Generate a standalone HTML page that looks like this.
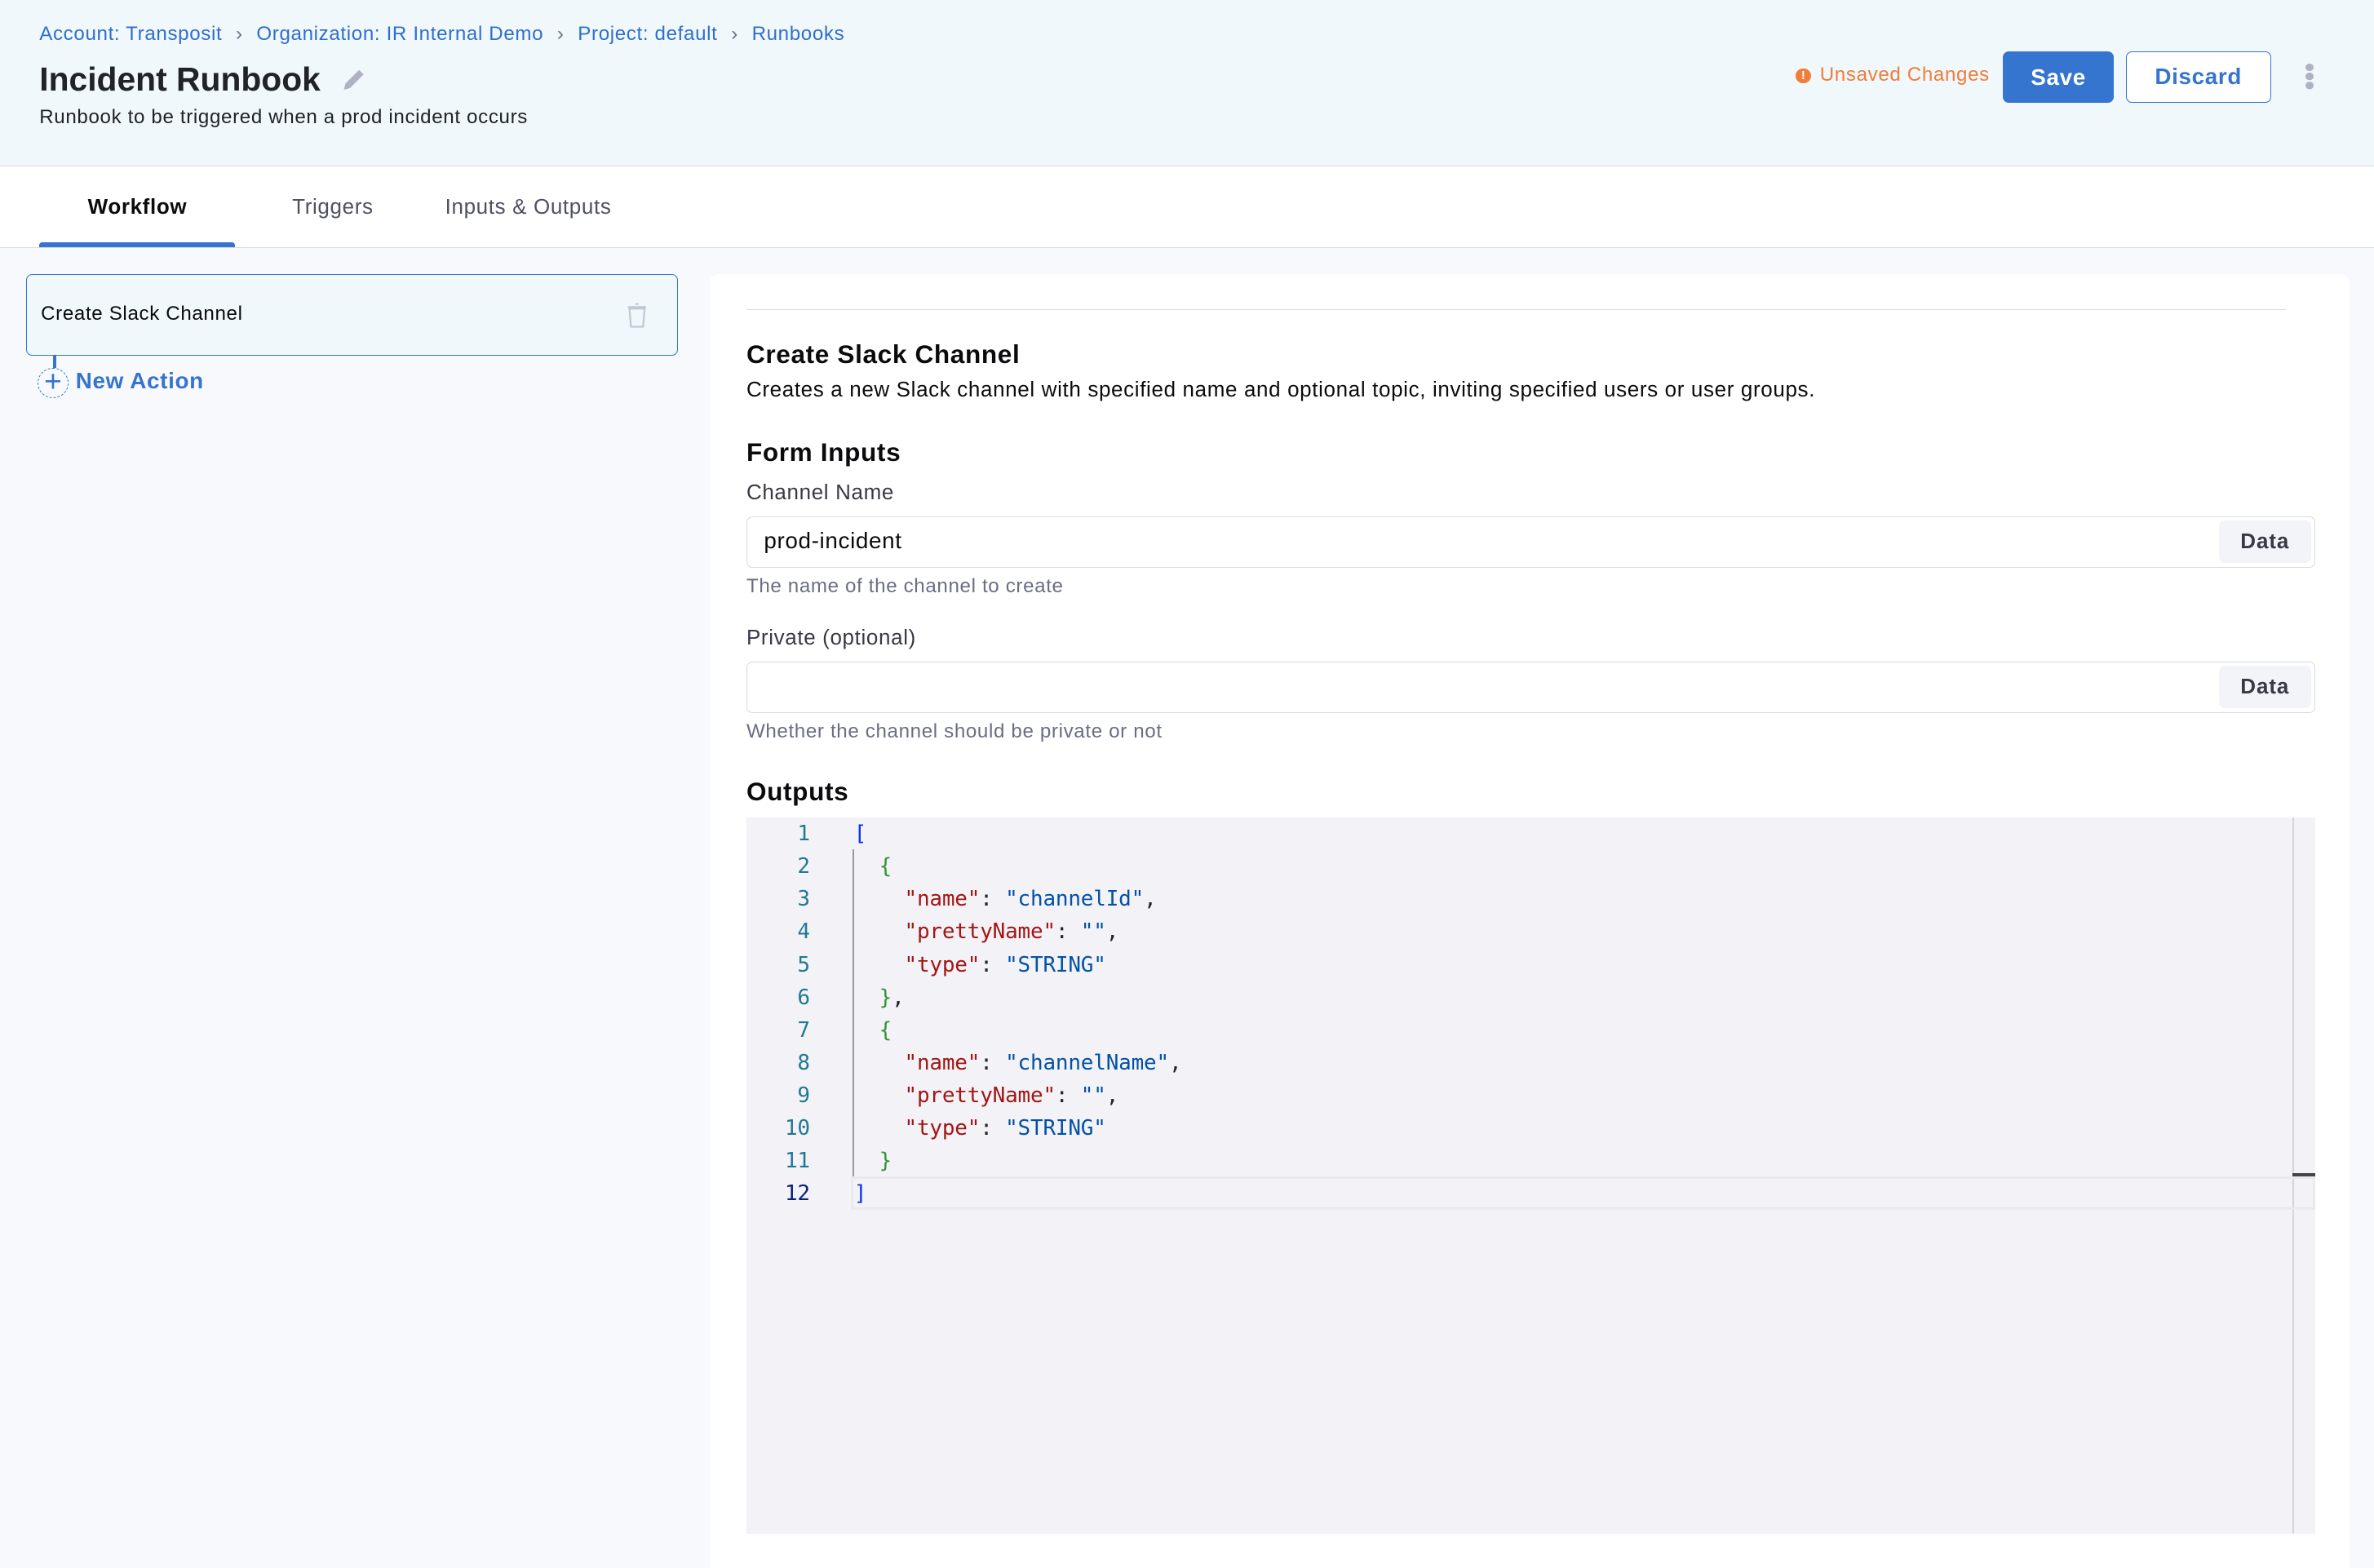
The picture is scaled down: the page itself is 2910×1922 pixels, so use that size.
<!DOCTYPE html>
<html><head><meta charset="utf-8"><style>
*{box-sizing:border-box;margin:0;padding:0}
html,body{width:2910px;height:1922px;overflow:hidden;background:#f8f9fc}
#w{zoom:1.85587;width:1568px;height:1036px;position:relative;font-family:"Liberation Sans",sans-serif;color:#22222a;overflow:hidden;letter-spacing:.35px}
.a{position:absolute;white-space:nowrap}
.hdr{left:0;top:0;width:1568px;height:110px;background:#f0f8fb;border-bottom:1px solid #d9dae5}
.bc{top:15px;left:26px;font-size:13px;color:#2f6fce}
.bc span{color:#6b6d85;margin:0 9px}
.tabs{left:0;top:110px;width:1568px;height:54px;background:#fff;border-bottom:1px solid #d9dae5}
.panel{left:469px;top:181px;width:1083px;height:870px;background:#fff;border-radius:6px}
.lbl{font-size:14px;color:#383946}
.help{font-size:13px;color:#6b6d85}
.inp{left:493px;width:1036px;height:34px;border:1px solid #d9dae5;border-radius:4px;background:#fff}
.data{position:absolute;right:2px;top:2px;width:61px;height:28px;background:#f3f3fa;border-radius:4px;font-size:14px;font-weight:bold;color:#383946;text-align:center;line-height:28px;letter-spacing:.5px}
.ed{left:493px;top:540px;width:1036px;height:473px;background:#f2f2f7}
.ln{font-family:"DejaVu Sans Mono",monospace;font-size:14px;line-height:21.6px;letter-spacing:-.1px}
.k{color:#a31515}.s{color:#0451a5}.g{color:#319331}.b{color:#0431fa}
</style></head><body><div id="w">
<div class="a hdr"></div>
<div class="a bc">Account: Transposit<span>›</span>Organization: IR Internal Demo<span>›</span>Project: default<span>›</span>Runbooks</div>
<div class="a" style="left:26px;top:40px;font-size:22px;font-weight:bold;color:#22222a;letter-spacing:0">Incident Runbook</div>
<svg class="a" style="left:224px;top:44px" width="18" height="18" viewBox="0 0 18 18"><path d="M3 15 L4 11 L13 2 L16 5 L7 14 Z" fill="#b0b1c4"/></svg>
<div class="a" style="left:26px;top:70px;font-size:13px">Runbook to be triggered when a prod incident occurs</div>
<div class="a" style="left:1186px;top:45px;width:10px;height:10px;border-radius:50%;background:#f07d3a;color:#fff;font-size:8px;font-weight:bold;text-align:center;line-height:10px;letter-spacing:0">!</div>
<div class="a" style="left:1202px;top:42px;font-size:13px;color:#f07d3a">Unsaved Changes</div>
<div class="a" style="left:1323px;top:34px;width:73px;height:34px;background:#3574cf;border-radius:4px;color:#fff;font-weight:bold;font-size:15px;text-align:center;line-height:34px">Save</div>
<div class="a" style="left:1404px;top:34px;width:96px;height:34px;background:#fff;border:1px solid #3574cf;border-radius:4px;color:#3574cf;font-weight:bold;font-size:15px;text-align:center;line-height:32px">Discard</div>
<div class="a" style="left:1523px;top:42px;width:5px;height:5px;border-radius:50%;background:#b0b1c4;box-shadow:0 6px 0 #b0b1c4,0 12px 0 #b0b1c4"></div>
<div class="a tabs"></div>
<div class="a" style="left:58px;top:128px;font-size:14px;font-weight:bold;color:#0b0b0d">Workflow</div>
<div class="a" style="left:193px;top:128px;font-size:14px;color:#4f5162">Triggers</div>
<div class="a" style="left:294px;top:128px;font-size:14px;color:#4f5162">Inputs &amp; Outputs</div>
<div class="a" style="left:26px;top:160px;width:129px;height:3px;background:#3574cf;border-radius:2px 2px 0 0"></div>
<div class="a" style="left:17px;top:181px;width:431px;height:54px;border:1px solid #3574cf;border-radius:4px;background:#f0f8fb"></div>
<div class="a" style="left:27px;top:200px;font-size:13px;color:#0b0b0d">Create Slack Channel</div>
<svg class="a" style="left:413px;top:199px" width="16" height="18" viewBox="0 0 16 18"><path d="M3 5 H13 L12 17 H4 Z M2 4 H14 M7 2 H9" fill="none" stroke="#c5c6d4" stroke-width="1.2"/></svg>
<div class="a" style="left:35px;top:235px;width:2px;height:8px;background:#3574cf"></div>
<div class="a" style="left:25px;top:243px;width:20px;height:20px;border:1px dashed #3574cf;border-radius:50%;color:#3574cf;font-size:20px;line-height:17px;text-align:center;letter-spacing:0">+</div>
<div class="a" style="left:50px;top:243px;font-size:15px;font-weight:bold;color:#3574cf">New Action</div>
<div class="a panel"></div>
<div class="a" style="left:493px;top:204px;width:1017px;height:1px;background:#d9dae5"></div>
<div class="a" style="left:493px;top:224px;font-size:17px;font-weight:bold;color:#0b0b0d">Create Slack Channel</div>
<div class="a" style="left:493px;top:249px;font-size:14px;color:#0b0b0d">Creates a new Slack channel with specified name and optional topic, inviting specified users or user groups.</div>
<div class="a" style="left:493px;top:289px;font-size:17px;font-weight:bold;color:#0b0b0d">Form Inputs</div>
<div class="a lbl" style="left:493px;top:317px">Channel Name</div>
<div class="a inp" style="top:341px"><div style="position:absolute;left:11px;top:7px;font-size:15px;color:#0b0b0d">prod-incident</div><div class="data">Data</div></div>
<div class="a help" style="left:493px;top:380px">The name of the channel to create</div>
<div class="a lbl" style="left:493px;top:413px">Private (optional)</div>
<div class="a inp" style="top:437px"><div class="data">Data</div></div>
<div class="a help" style="left:493px;top:476px">Whether the channel should be private or not</div>
<div class="a" style="left:493px;top:513px;font-size:17px;font-weight:bold;color:#0b0b0d">Outputs</div>
<div class="a ed"></div>
<div class="a" style="left:1514px;top:540px;width:1px;height:473px;background:#d4d4dc"></div>
<div class="a" style="left:1514px;top:775px;width:15px;height:2px;background:#444"></div>
<div class="a" style="left:562px;top:777px;width:967px;height:22px;border:2px solid #eaeaee"></div>
<div class="a" style="left:563px;top:561px;width:1px;height:216px;background:#9a9a9a"></div>
<div class="a ln" style="left:500px;top:540px;width:35px;text-align:right;color:#237893">1<br>2<br>3<br>4<br>5<br>6<br>7<br>8<br>9<br>10<br>11<br><span style="color:#0b216f">12</span></div>
<div class="a ln" style="left:564px;top:540px;white-space:pre"><span class="b">[</span>
  <span class="g">{</span>
    <span class="k">"name"</span>: <span class="s">"channelId"</span>,
    <span class="k">"prettyName"</span>: <span class="s">""</span>,
    <span class="k">"type"</span>: <span class="s">"STRING"</span>
  <span class="g">}</span>,
  <span class="g">{</span>
    <span class="k">"name"</span>: <span class="s">"channelName"</span>,
    <span class="k">"prettyName"</span>: <span class="s">""</span>,
    <span class="k">"type"</span>: <span class="s">"STRING"</span>
  <span class="g">}</span>
<span class="b">]</span></div>
</div></body></html>
